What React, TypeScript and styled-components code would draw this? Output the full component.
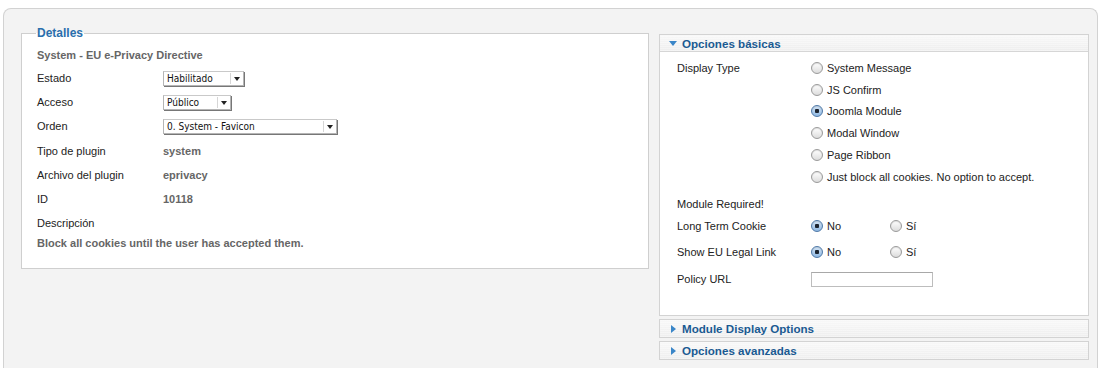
import React from 'react';
import styled, { createGlobalStyle } from 'styled-components';

const GlobalStyle = createGlobalStyle`
  html, body {
    margin: 0;
    padding: 0;
    background: #ffffff;
    font-family: "Liberation Sans", Arial, sans-serif;
    font-size: 11px;
    color: #222;
  }
`;

const Page = styled.div`
  height: 368px;
  overflow: hidden;
  padding: 8px 2px 0 3px;
`;

const Frame = styled.div`
  border: 1px solid #d2d2d2;
  border-bottom: none;
  border-radius: 8px 8px 0 0;
  background: #f3f3f3;
  height: 400px;
  padding: 17px 9px 0 17px;
  display: grid;
  grid-template-columns: 628px 430px;
  column-gap: 10px;
  align-items: start;
`;

const Fieldset = styled.fieldset`
  margin: 0;
  padding: 5px 15px 14px 15px;
  border: 1px solid #cfcfcf;
  background: #fff;
  min-width: 0;
`;

const Legend = styled.legend`
  color: #2a6fad;
  font-weight: bold;
  font-size: 12px;
  padding: 0 1px;
  margin-left: -1px;
  line-height: 14px;
`;

const PluginTitle = styled.div`
  color: #666;
  font-weight: bold;
  height: 21px;
  line-height: 20px;
`;

const Row = styled.div<{ $labelWidth?: number; $height?: number; $gapTop?: number }>`
  display: grid;
  grid-template-columns: ${(p) => p.$labelWidth ?? 126}px 1fr;
  align-items: center;
  height: ${(p) => p.$height ?? 24}px;
  margin-top: ${(p) => p.$gapTop ?? 0}px;
`;

const Label = styled.span<{ $lineHeight?: number }>`
  color: #222;
  line-height: ${(p) => (p.$lineHeight ? `${p.$lineHeight}px` : 'normal')};
`;

const Value = styled.span`
  color: #666;
  font-weight: bold;
`;

const Description = styled.div`
  color: #666;
  font-weight: bold;
  height: 20px;
  line-height: 18px;
`;

const SelectBox = styled.div<{ $width: number }>`
  width: ${(p) => p.$width}px;
  height: 15px;
  box-sizing: border-box;
  border: 1px solid #b5b5b5;
  border-top-color: #c9c9c9;
  background: #fff;
  display: flex;
  align-items: center;
  justify-content: space-between;
  font-family: "DejaVu Sans Condensed", "Liberation Sans Narrow", "Liberation Sans", sans-serif;
  font-size: 10px;
  color: #111;
  padding-left: 3px;
  box-shadow: 1px 1px 0 #777;
`;

const SelectArrow = styled.span`
  width: 11px;
  height: 11px;
  margin-right: 1px;
  border-left: 1px solid #d6d6d6;
  display: flex;
  align-items: center;
  justify-content: center;
  &::after {
    content: '';
    border-left: 3px solid transparent;
    border-right: 3px solid transparent;
    border-top: 4px solid #222;
    margin-top: 1px;
  }
`;

const RightColumn = styled.div`
  padding-top: 8px;
  display: flex;
  flex-direction: column;
  gap: 3px;
`;

const Panel = styled.div`
  border: 1px solid #d3d3d3;
  background: #fff;
`;

const PanelHeader = styled.div<{ $open?: boolean }>`
  height: ${(p) => (p.$open ? 16 : 17)}px;
  display: flex;
  align-items: center;
  padding-left: 9px;
  gap: 5px;
  background: repeating-linear-gradient(
      0deg,
      rgba(255, 255, 255, 0.35) 0 1px,
      transparent 1px 2px
    ),
    linear-gradient(#f8f8f8, #eeeeee);
  border-bottom: ${(p) => (p.$open ? '1px solid #d6d6d6' : 'none')};
  color: #1a5a92;
  font-weight: bold;
  font-size: 11.6px;
`;

const Caret = styled.span<{ $open?: boolean }>`
  width: 0;
  height: 0;
  ${(p) =>
    p.$open
      ? `border-left: 4px solid transparent;
         border-right: 4px solid transparent;
         border-top: 5px solid #3a86c8;`
      : `border-top: 4px solid transparent;
         border-bottom: 4px solid transparent;
         border-left: 5px solid #3a86c8;
         margin-left: 2px;
         margin-right: 1px;`}
`;

const PanelBody = styled.div`
  padding: 5px 16px 0 17px;
  height: 263px;
  box-sizing: border-box;
`;

const RadioStack = styled.div`
  display: flex;
  flex-direction: column;
`;

const RadioOption = styled.label<{ $width?: number }>`
  display: flex;
  align-items: center;
  gap: 4px;
  height: 21.8px;
  width: ${(p) => (p.$width ? `${p.$width}px` : 'auto')};
  color: #222;
`;

const RadioDot = styled.span<{ $checked?: boolean }>`
  width: 12px;
  height: 12px;
  box-sizing: border-box;
  border-radius: 50%;
  border: 1px solid ${(p) => (p.$checked ? '#4f79a8' : '#9a9a9a')};
  background: ${(p) =>
    p.$checked
      ? 'radial-gradient(circle at 50% 50%, #1c2430 0 2px, transparent 2.5px), linear-gradient(#d5e6f7, #8fb8e2)'
      : 'linear-gradient(#ffffff, #dcdcdc)'};
  box-shadow: inset 0 1px 1px rgba(0, 0, 0, 0.12);
`;

const InlineRadios = styled.div`
  display: flex;
  align-items: center;
`;

const TextInput = styled.div`
  width: 122px;
  height: 15px;
  box-sizing: border-box;
  border: 1px solid #bdbdbd;
  border-top-color: #a8a8a8;
  background: #fff;
`;

const displayTypes = [
  'System Message',
  'JS Confirm',
  'Joomla Module',
  'Modal Window',
  'Page Ribbon',
  'Just block all cookies. No option to accept.',
];

const Select = ({ value, width }: { value: string; width: number }) => (
  <SelectBox $width={width}>
    <span>{value}</span>
    <SelectArrow />
  </SelectBox>
);

const Radio = ({ label, checked, width }: { label: string; checked?: boolean; width?: number }) => (
  <RadioOption $width={width}>
    <RadioDot $checked={checked} />
    <span>{label}</span>
  </RadioOption>
);

const YesNo = () => (
  <InlineRadios>
    <Radio label="No" checked width={79} />
    <Radio label="Sí" />
  </InlineRadios>
);

export default function App() {
  return (
    <>
      <GlobalStyle />
      <Page>
        <Frame>
          <Fieldset>
            <Legend>Detalles</Legend>
            <PluginTitle>System - EU e-Privacy Directive</PluginTitle>
            <Row>
              <Label>Estado</Label>
              <Select value="Habilitado" width={81} />
            </Row>
            <Row>
              <Label>Acceso</Label>
              <Select value="Público" width={68} />
            </Row>
            <Row>
              <Label>Orden</Label>
              <Select value="0. System - Favicon" width={174} />
            </Row>
            <Row $height={25}>
              <Label>Tipo de plugin</Label>
              <Value>system</Value>
            </Row>
            <Row>
              <Label>Archivo del plugin</Label>
              <Value>eprivacy</Value>
            </Row>
            <Row>
              <Label>ID</Label>
              <Value>10118</Value>
            </Row>
            <Row $height={23}>
              <Label>Descripción</Label>
              <span />
            </Row>
            <Description>Block all cookies until the user has accepted them.</Description>
          </Fieldset>

          <RightColumn>
            <Panel>
              <PanelHeader $open>
                <Caret $open />
                Opciones básicas
              </PanelHeader>
              <PanelBody>
                <Row $labelWidth={134} $height={131} style={{ alignItems: 'start' }}>
                  <Label $lineHeight={23}>Display Type</Label>
                  <RadioStack>
                    {displayTypes.map((t) => (
                      <Radio key={t} label={t} checked={t === 'Joomla Module'} />
                    ))}
                  </RadioStack>
                </Row>
                <Row $labelWidth={134} $height={22} $gapTop={5}>
                  <Label>Module Required!</Label>
                </Row>
                <Row $labelWidth={134} $height={22}>
                  <Label>Long Term Cookie</Label>
                  <YesNo />
                </Row>
                <Row $labelWidth={134} $height={22} $gapTop={4}>
                  <Label>Show EU Legal Link</Label>
                  <YesNo />
                </Row>
                <Row $labelWidth={134} $height={22} $gapTop={5}>
                  <Label>Policy URL</Label>
                  <TextInput />
                </Row>
              </PanelBody>
            </Panel>
            <Panel>
              <PanelHeader>
                <Caret />
                Module Display Options
              </PanelHeader>
            </Panel>
            <Panel>
              <PanelHeader>
                <Caret />
                Opciones avanzadas
              </PanelHeader>
            </Panel>
          </RightColumn>
        </Frame>
      </Page>
    </>
  );
}
